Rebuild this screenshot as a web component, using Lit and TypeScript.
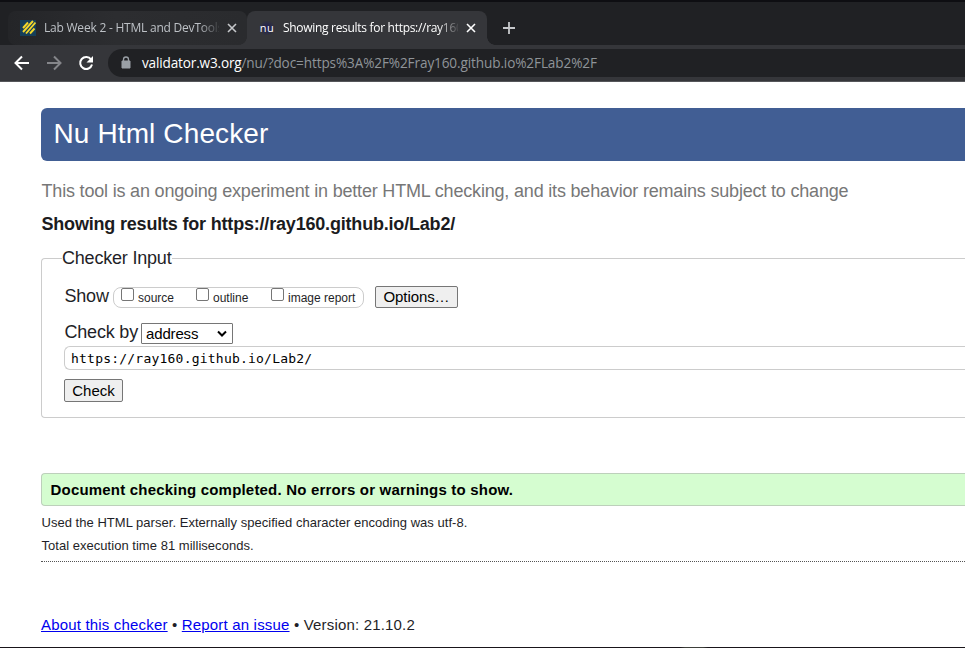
import { LitElement, html, css, svg } from "lit";
import { customElement } from "lit/decorators.js";

@customElement("browser-chrome")
class BrowserChrome extends LitElement {
  static styles = css`
    :host { display: block; height: 82px; background: #202124; font: 12px/16px "Open Sans", "Noto Sans", sans-serif; }
    * { box-sizing: border-box; }
    svg { display: block; flex: none; }
    .edge { height: 2px; background: #0e0e12; }
    .tabs { display: flex; height: 43px; padding: 9px 0 0 8px; }
    .tab { display: flex; align-items: center; width: 239px; height: 34px; padding-left: 12px; border-radius: 8px; background: linear-gradient(90deg, #242528, #2c2d30 45%, #2a2b2e); color: #bdc1c6; }
    .tab.on { width: 240px; background: #35363a; border-radius: 8px 8px 0 0; color: #fff; position: relative; }
    .tab.on::before, .tab.on::after { content: ""; position: absolute; bottom: 0; width: 8px; height: 8px; }
    .tab.on::before { left: -8px; background: radial-gradient(circle at 0 0, transparent 7.5px, #35363a 8px); }
    .tab.on::after { right: -8px; background: radial-gradient(circle at 100% 0, transparent 7.5px, #35363a 8px); }
    .title { width: 175px; margin-left: 8px; overflow: hidden; white-space: nowrap; letter-spacing: -0.3px; -webkit-mask-image: linear-gradient(90deg, #000 155px, transparent 177px); mask-image: linear-gradient(90deg, #000 155px, transparent 177px); }
    .t1 { letter-spacing: -0.220px; }
    .close { margin-left: 8px; }
    .nu { width: 16px; text-align: center; font-size: 11px; line-height: 14px; letter-spacing: 0.4px; background: radial-gradient(circle, #1d1b55, #35363a00 75%); }
    .plus { margin: 10px 0 0 15px; }
    .bar { display: flex; height: 37px; padding: 4px 0; background: #35363a; border-bottom: 1px solid #55565a; }
    .nav { display: flex; gap: 16px; width: 108px; padding: 6px 0 0 14px; }
    .url { flex: 1; display: flex; align-items: center; height: 28px; padding-left: 11px; border-radius: 14px 0 0 14px; background: #202124; color: #8f9499; font-size: 13.600px; letter-spacing: -0.120px; }
    .text { margin-left: 9px; white-space: nowrap; }
    .host { color: #fff; letter-spacing: -0.170px; }
  `;
  private cross(color: string) {
    return html`<svg class="close" width="10" height="10" viewBox="0 0 10 10">${svg`<path d="M1 1l8 8M9 1l-8 8" stroke=${color} stroke-width="1.6"/>`}</svg>`;
  }
  render() {
    return html`
      <div class="edge"></div>
      <div class="tabs">
        <div class="tab">
          <svg width="16" height="16" viewBox="0 0 16 16"><path fill="#153e59" d="M0 0h16v16H0z"/><path d="M3 8l5-5.500M3 12L13 1M6 13.500L15.500 2.500M10 13.500l4.500-5" stroke="#f3d72b" stroke-width="1.900"/></svg>
          <div class="title t1">Lab Week 2 - HTML and DevTools</div>${this.cross("#c6c8cb")}
        </div>
        <div class="tab on">
          <div class="nu">nu</div>
          <div class="title">Showing results for https://ray160.github.io</div>${this.cross("#fff")}
        </div>
        <svg class="plus" width="14" height="14" viewBox="0 0 14 14"><path d="M7 1v12M1 7h12" stroke="#c6c8cb" stroke-width="1.8"/></svg>
      </div>
      <div class="bar">
        <div class="nav">
          <svg width="16" height="16" viewBox="0 0 16 16" fill="none" stroke="#fff" stroke-width="2"><path d="M15 8H2M8 1.500L1.500 8 8 14.500"/></svg>
          <svg width="16" height="16" viewBox="0 0 16 16" fill="none" stroke="#85868a" stroke-width="2"><path d="M1 8h13M8 1.500L14.500 8 8 14.500"/></svg>
          <svg width="16" height="16" viewBox="0 0 16 16"><path d="M13.100 4.500A6 6 0 1 0 14 9.500" fill="none" stroke="#fff" stroke-width="2"/><path d="M15 1v6.500H8.500z" fill="#fff"/></svg>
        </div>
        <div class="url">
          <svg width="14" height="14" viewBox="0 0 14 14"><path d="M3 5h8v7H3z" fill="#9aa0a6" stroke="#9aa0a6" stroke-linejoin="round"/><path d="M4.500 5V3.500a2.500 2.500 0 0 1 5 0V5" fill="none" stroke="#9aa0a6" stroke-width="1.300"/></svg>
          <div class="text"><span class="host">validator.w3.org</span><span class="path">/nu/?doc=https%3A%2F%2Fray160.github.io%2FLab2%2F</span></div>
        </div>
      </div>`;
  }
}

@customElement("app-root")
class AppRoot extends LitElement {
  static styles = css`
    :host { display: flex; flex-direction: column; height: 648px; overflow: hidden; background: #fff; color: #1f1f28; font-family: "Liberation Sans", Arial, sans-serif; white-space: nowrap; }
    * { box-sizing: border-box; }
    main { height: 565px; flex: none; padding: 26px 0 0 41px; }
    h1 { height: 53px; margin: 0; padding-left: 12.500px; border-radius: 6px 0 0 6px; background: #415e94; color: #fff; font-size: 28px; font-weight: 400; line-height: 51px; letter-spacing: 0.120px; }
    .about { height: 24px; margin: 18px 0 0 0.500px; color: #777; font-size: 18px; line-height: 24px; letter-spacing: -0.185px; }
    h2 { height: 24px; margin: 9px 0 0 0.500px; font-size: 18px; line-height: 24px; color: #1b1b20; letter-spacing: -0.190px; }
    .form { height: 160px; margin-top: 22px; padding: 0 0 0 22px; border: 1px solid #ccc; border-right: 0; border-radius: 4px 0 0 4px; font-size: 18px; letter-spacing: -0.200px; }
    .legend { display: block; width: 110px; height: 24px; margin: -13px 0 0 -2px; background: #fff; line-height: 24px; }
    .row { display: flex; height: 24px; line-height: 22px; padding-left: 0.500px; }
    .show { margin-top: 15px; }
    .label { flex: none; width: 44px; }
    .by .label { width: 72.500px; }
    .checks { display: flex; width: 251px; height: 21px; margin: 2px 11px 0 4.500px; padding-left: 7px; border: 1px solid #ccc; border-radius: 8px; font-size: 12px; line-height: 20px; letter-spacing: 0; }
    .check { display: flex; width: 75px; }
    .check:last-child { width: auto; }
    .box { width: 13px; height: 13px; margin: 0 4px 0 0; border: 1px solid #767676; border-radius: 2px; background: #fff; }
    button { display: block; padding: 0; border: 1px solid #767676; border-radius: 2px; background: #efefef; color: #000; font: 15px/17px "Liberation Sans", Arial, sans-serif; text-align: center; }
    .options { width: 83px; height: 22px; margin-top: 1px; padding-bottom: 2px; letter-spacing: -0.100px; }
    .by { margin-top: 12px; }
    .select { display: flex; align-items: center; justify-content: space-between; width: 92px; height: 21px; margin: 2px 0 0 4px; padding: 0 5px 0 4px; border: 1px solid #767676; border-radius: 1px; color: #000; font-size: 15px; line-height: 19px; letter-spacing: -0.150px; }
    .input { height: 24px; margin-top: 1px; padding-left: 6px; border: 1px solid #ccc; border-right: 0; border-radius: 6px 0 0 6px; color: #000; font: 13px/23px "DejaVu Sans Mono", monospace; letter-spacing: 0.220px; }
    .submit { width: 59px; height: 23px; margin-top: 9px; padding-bottom: 1px; }
    .success { height: 33px; margin-top: 55px; padding-left: 8.500px; border: 1px solid #bdd0bb; border-right: 0; border-radius: 4px 0 0 4px; background: #d5fdd0; color: #000; font-size: 15px; font-weight: 700; line-height: 32px; letter-spacing: 0.195px; }
    .details { height: 56px; padding: 5px 0 0 0.500px; border-bottom: 1px dotted #555; font-size: 13px; line-height: 23px; letter-spacing: 0.030px; }
    .foot { height: 24px; margin-top: 51px; font-size: 15px; line-height: 24px; letter-spacing: 0.180px; }
    a { color: #0000ee; text-decoration: underline; }
    .taskbar { height: 1px; flex: none; background: linear-gradient(90deg, #19151a 680px, #3e403b 685px, #3e403b 703px, #19151a 708px); }
  `;
  render() {
    return html`
      <browser-chrome></browser-chrome>
      <main>
        <h1>Nu Html Checker</h1>
        <div class="about">This tool is an ongoing experiment in better HTML checking, and its behavior remains subject to change</div>
        <h2>Showing results for https://ray160.github.io/Lab2/</h2>
        <div class="form">
          <span class="legend">Checker Input</span>
          <div class="row show">
            <span class="label">Show</span>
            <div class="checks">${["source", "outline", "image report"].map((t) => html`<label class="check"><span class="box"></span>${t}</label>`)}</div>
            <button class="options">Options…</button>
          </div>
          <div class="row by">
            <span class="label">Check by</span>
            <div class="select">address<svg width="10" height="7" viewBox="0 0 10 7"><path d="M1 1.500l4 4 4-4" fill="none" stroke="#000" stroke-width="2"/></svg></div>
          </div>
          <div class="input">https://ray160.github.io/Lab2/</div>
          <button class="submit">Check</button>
        </div>
        <div class="success">Document checking completed. No errors or warnings to show.</div>
        <div class="details">
          <div>Used the HTML parser. Externally specified character encoding was utf-8.</div>
          <div>Total execution time 81 milliseconds.</div>
        </div>
        <div class="foot"><a>About this checker</a> • <a>Report an issue</a> • Version: 21.10.2</div>
      </main>
      <div class="taskbar"></div>`;
  }
}
